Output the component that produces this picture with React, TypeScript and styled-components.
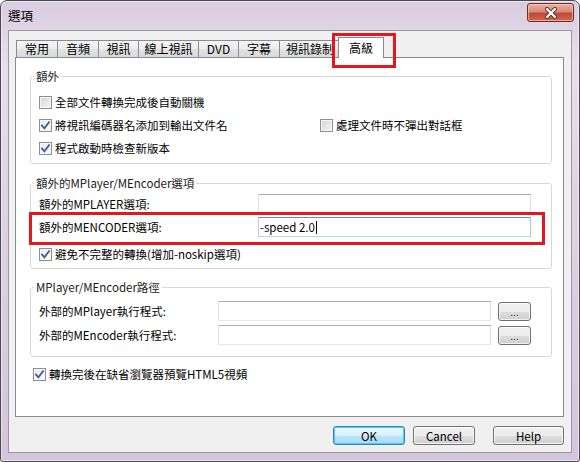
import React from 'react';
import styled, { createGlobalStyle, css } from 'styled-components';

const GlobalStyle = createGlobalStyle`
  html, body { margin: 0; padding: 0; background: #ffffff; }
  body {
    font-family: "Noto Sans CJK TC", "Liberation Sans", sans-serif;
    font-size: 11.5px;
    color: #000;
  }
  * { box-sizing: border-box; }
`;

const Window = styled.div`
  width: 580px;
  height: 462px;
  display: flex;
  flex-direction: column;
  border: 1px solid #4b4453;
  border-radius: 7px 7px 3px 3px;
  background: linear-gradient(180deg, #d8ccdf 0%, #e8dfeb 14%, #ded2e3 45%, #d3c6da 100%);
  box-shadow: inset 0 0 0 1px rgba(255, 255, 255, 0.55);
  overflow: hidden;
`;

const TitleBar = styled.div`
  height: 29px;
  flex: none;
  display: flex;
  align-items: center;
  padding-left: 7px;
`;

const Title = styled.span`
  font-size: 12.5px;
  line-height: 16px;
  color: #000;
`;

const CloseButton = styled.div`
  margin-left: auto;
  margin-right: 5px;
  align-self: flex-start;
  margin-top: 2px;
  width: 47px;
  height: 19px;
  border: 1px solid #6e2b27;
  border-radius: 3px;
  background: linear-gradient(180deg, #eab0a2 0%, #d88a7b 45%, #c24a38 55%, #cf6a4d 100%);
  box-shadow: inset 0 0 0 1px rgba(255, 220, 210, 0.55);
  display: flex;
  align-items: center;
  justify-content: center;
`;

const Client = styled.div`
  flex: 1;
  margin: 0 7px 8px;
  border: 1px solid #9e95a6;
  background: #f0f0f0;
  padding: 6px 7px 7px 6px;
  display: flex;
  flex-direction: column;
`;

const TabStrip = styled.div`
  height: 21px;
  flex: none;
  display: flex;
  align-items: flex-end;
  margin: 0 0 -1px 1px;
`;

const Tab = styled.div<{ $w: number; $active?: boolean }>`
  width: ${(p) => p.$w}px;
  flex: none;
  display: flex;
  align-items: center;
  justify-content: center;
  font-size: 12px;
  line-height: 14px;
  white-space: nowrap;
  border: 1px solid #898c95;
  border-bottom: none;
  margin-right: -1px;
  ${(p) =>
    p.$active
      ? css`
          position: relative;
          z-index: 2;
          height: 21px;
          margin-left: -2px;
          margin-right: 0;
          background: #ffffff;
        `
      : css`
          height: 17px;
          margin-bottom: 1px;
          background: linear-gradient(180deg, #f4f4f4 0%, #ececec 50%, #e2e2e2 51%, #dadada 100%);
        `}
`;

const Highlight = styled.span<{ $l: number; $t: number; $r: number; $b: number }>`
  position: absolute;
  left: ${(p) => p.$l}px;
  top: ${(p) => p.$t}px;
  right: ${(p) => p.$r}px;
  bottom: ${(p) => p.$b}px;
  border: 3px solid #e4161f;
  pointer-events: none;
  z-index: 3;
`;

const Panel = styled.div`
  height: 360px;
  flex: none;
  background: #ffffff;
  border: 1px solid #898c95;
  padding: 11px 11px 0 14px;
  display: flex;
  flex-direction: column;
`;

const GroupBox = styled.fieldset<{ $mt: number; $pt: number; $pb: number }>`
  margin: ${(p) => p.$mt}px 0 0;
  padding: ${(p) => p.$pt}px 19px ${(p) => p.$pb}px 8px;
  border: 1px solid #d8d8d8;
  border-radius: 3px;
  min-width: 0;
`;

const Legend = styled.legend`
  padding: 0 2px;
  margin-left: -5px;
  font-size: 11.5px;
  line-height: 14px;
  color: #1a1a1a;
`;

const CheckGrid = styled.div`
  display: grid;
  grid-template-columns: 281px 1fr;
  grid-auto-rows: 22px;
  row-gap: 1px;
  align-items: center;
`;

const CheckRow = styled.label<{ $span?: boolean; $mt?: number; $ml?: number }>`
  display: flex;
  align-items: center;
  gap: 3px;
  height: 20px;
  line-height: 14px;
  white-space: nowrap;
  margin-top: ${(p) => p.$mt ?? 0}px;
  margin-left: ${(p) => p.$ml ?? 0}px;
  ${(p) =>
    p.$span &&
    css`
      grid-column: 1 / -1;
    `}
`;

const Box = styled.span<{ $checked?: boolean }>`
  width: 13px;
  height: 13px;
  flex: none;
  border: 1px solid #8e8f8f;
  background: ${(p) =>
    p.$checked
      ? 'linear-gradient(135deg, #e7ecf3 0%, #fbfcfe 100%)'
      : 'linear-gradient(135deg, #d6d6d6 0%, #f4f4f4 100%)'};
  box-shadow: inset 0 0 0 1px #f6f6f6;
  display: flex;
  align-items: center;
  justify-content: center;
`;

const FieldRow = styled.div<{ $labelW: number; $mt?: number; $button?: boolean }>`
  position: relative;
  display: grid;
  grid-template-columns: ${(p) => (p.$button ? `${p.$labelW}px 273px 33px` : `${p.$labelW}px 273px`)};
  column-gap: ${(p) => (p.$button ? 7 : 0)}px;
  align-items: center;
  height: 20px;
  margin-top: ${(p) => p.$mt ?? 0}px;
  line-height: 14px;
  white-space: nowrap;
`;

const TextBox = styled.div<{ $focused?: boolean }>`
  height: 20px;
  border: 1px solid;
  border-color: #abadb3 #dbdfe6 #e3e9ef #e2e3ea;
  background: #ffffff;
  display: flex;
  align-items: center;
  padding-left: 1px;
  font-size: 11.5px;
  ${(p) =>
    p.$focused &&
    css`
      border-color: #5c93bc #a4c9e3 #b7d9ed #b5cfe7;
    `}
`;

const Caret = styled.span`
  width: 1px;
  height: 13px;
  background: #000;
  margin-left: 1px;
`;

const SmallButton = styled.div`
  width: 33px;
  height: 19px;
  border: 1px solid #707070;
  border-radius: 3px;
  background: linear-gradient(180deg, #f2f2f2 0%, #ebebeb 50%, #dddddd 51%, #cfcfcf 100%);
  box-shadow: inset 0 0 0 1px rgba(255, 255, 255, 0.7);
  display: flex;
  align-items: flex-end;
  justify-content: center;
  font-size: 10px;
  line-height: 12px;
  padding-bottom: 2px;
  color: #333;
`;

const ButtonBar = styled.div`
  margin-top: 9px;
  height: 19px;
  display: flex;
  justify-content: flex-end;
`;

const DialogButton = styled.div<{ $w: number; $ml: number; $default?: boolean }>`
  width: ${(p) => p.$w}px;
  margin-left: ${(p) => p.$ml}px;
  height: 19px;
  border: 1px solid #707070;
  border-radius: 3px;
  background: linear-gradient(180deg, #f2f2f2 0%, #ebebeb 50%, #dddddd 51%, #cfcfcf 100%);
  box-shadow: inset 0 0 0 1px rgba(255, 255, 255, 0.75);
  display: flex;
  align-items: center;
  justify-content: center;
  font-size: 11.5px;
  line-height: 14px;
  color: #000;
  ${(p) =>
    p.$default &&
    css`
      border-color: #3c7fb1;
      background: linear-gradient(180deg, #eaf6fd 0%, #d9f0fc 50%, #bee6fd 51%, #a7d9f5 100%);
      box-shadow: inset 0 0 0 1px #48d0f4;
    `}
`;

const Check: React.FC<{ checked?: boolean }> = ({ checked }) => (
  <Box $checked={checked}>
    {checked && (
      <svg width="11" height="11" viewBox="0 0 11 11">
        <path d="M2 5.6 L4.4 8.3 L9 2.2" fill="none" stroke="#3e5a96" strokeWidth="1.8" strokeLinecap="square" />
      </svg>
    )}
  </Box>
);

const tabs: { label: string; w: number }[] = [
  { label: '常用', w: 42 },
  { label: '音頻', w: 42 },
  { label: '視訊', w: 41 },
  { label: '線上視訊', w: 61 },
  { label: 'DVD', w: 41 },
  { label: '字幕', w: 42 },
  { label: '視訊錄制', w: 62 },
];

export default function App() {
  return (
    <>
      <GlobalStyle />
      <Window>
        <TitleBar>
          <Title>選項</Title>
          <CloseButton>
            <svg width="16" height="12" viewBox="0 0 16 12">
              <path d="M4 2 L12 10 M12 2 L4 10" stroke="#5a2a24" strokeWidth="4" strokeLinecap="round" />
              <path d="M4 2 L12 10 M12 2 L4 10" stroke="#ffffff" strokeWidth="2.4" strokeLinecap="round" />
            </svg>
          </CloseButton>
        </TitleBar>
        <Client>
          <TabStrip>
            {tabs.map((t) => (
              <Tab key={t.label} $w={t.w}>
                {t.label}
              </Tab>
            ))}
            <Tab $w={46} $active>
              高級
              <Highlight $l={-7} $t={-5} $r={-13} $b={-10} />
            </Tab>
          </TabStrip>
          <Panel>
            <GroupBox $mt={0} $pt={8} $pb={4}>
              <Legend>額外</Legend>
              <CheckGrid>
                <CheckRow $span>
                  <Check />
                  全部文件轉換完成後自動關機
                </CheckRow>
                <CheckRow>
                  <Check checked />
                  將視訊編碼器名添加到輸出文件名
                </CheckRow>
                <CheckRow>
                  <Check />
                  處理文件時不彈出對話框
                </CheckRow>
                <CheckRow $span>
                  <Check checked />
                  程式啟動時檢查新版本
                </CheckRow>
              </CheckGrid>
            </GroupBox>

            <GroupBox $mt={12} $pt={4} $pb={4}>
              <Legend>額外的MPlayer/MEncoder選項</Legend>
              <FieldRow $labelW={219}>
                <span>額外的MPLAYER選項:</span>
                <TextBox />
              </FieldRow>
              <FieldRow $labelW={219} $mt={3}>
                <span>額外的MENCODER選項:</span>
                <TextBox $focused>
                  -speed 2.0
                  <Caret />
                </TextBox>
                <Highlight $l={-10} $t={-5} $r={-13} $b={-8} />
              </FieldRow>
              <CheckRow $mt={7}>
                <Check checked />
                避免不完整的轉換(增加-noskip選項)
              </CheckRow>
            </GroupBox>

            <GroupBox $mt={11} $pt={7} $pb={11}>
              <Legend>MPlayer/MEncoder路徑</Legend>
              <FieldRow $labelW={172} $button>
                <span>外部的MPlayer執行程式:</span>
                <TextBox />
                <SmallButton>...</SmallButton>
              </FieldRow>
              <FieldRow $labelW={172} $button $mt={4}>
                <span>外部的MEncoder執行程式:</span>
                <TextBox />
                <SmallButton>...</SmallButton>
              </FieldRow>
            </GroupBox>

            <CheckRow $mt={7} $ml={3}>
              <Check checked />
              轉換完後在缺省瀏覽器預覽HTML5視頻
            </CheckRow>
          </Panel>
          <ButtonBar>
            <DialogButton $w={72} $ml={0} $default>
              OK
            </DialogButton>
            <DialogButton $w={62} $ml={8}>
              Cancel
            </DialogButton>
            <DialogButton $w={71} $ml={18}>
              Help
            </DialogButton>
          </ButtonBar>
        </Client>
      </Window>
    </>
  );
}
